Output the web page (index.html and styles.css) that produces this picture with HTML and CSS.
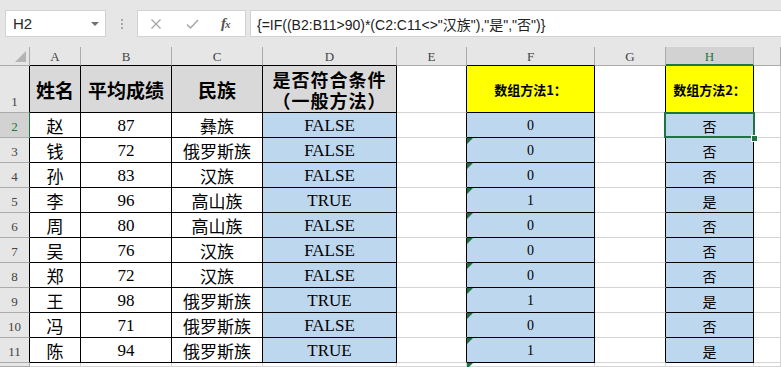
FILE: index.html
```html
<!DOCTYPE html>
<html lang="zh">
<head>
<meta charset="utf-8">
<title>Sheet</title>
<link rel="stylesheet" href="styles.css">
</head>
<body>
<div class="bar">
  <div class="namebox"><span>H2</span><span class="caret"></span></div>
  <div class="sep"><i></i><i></i><i></i></div>
  <div class="btns">
    <svg class="ic-x" width="12" height="12" viewBox="0 0 12 12"><path d="M1.5 1.5L10.5 10.5M10.5 1.5L1.5 10.5" stroke="#a6a6a6" stroke-width="1.3" fill="none"/></svg>
    <svg class="ic-ok" width="13" height="12" viewBox="0 0 13 12"><path d="M1 6.5L4.5 10L12 2" stroke="#a6a6a6" stroke-width="1.5" fill="none"/></svg>
    <span class="fx"><i>f</i><i class="sub">x</i></span>
  </div>
  <div class="formula">{=IF((B2:B11&gt;90)*(C2:C11&lt;&gt;"汉族"),"是","否")}</div>
</div>
<div class="sheet">
  <!-- header row -->
  <div class="corner"><span class="tri"></span></div>
  <div class="ch bk">A</div><div class="ch bk">B</div><div class="ch bk">C</div><div class="ch bk">D</div>
  <div class="ch">E</div><div class="ch bk">F</div><div class="ch">G</div><div class="ch on">H</div><div class="ch"></div>
  <!-- row 1 -->
  <div class="rh rk">1</div>
  <div class="c bx g hd">姓名</div><div class="c bx g hd">平均成绩</div><div class="c bx g hd">民族</div>
  <div class="c bx g hd two"><span>是否符合条件</span><span>（一般方法）</span></div>
  <div class="c rk"></div><div class="c bx y hs">数组方法1：</div><div class="c rk"></div><div class="c bx y hs">数组方法2：</div><div class="c"></div>
  <!-- row 2 -->
  <div class="rh on">2</div>
  <div class="c bx">赵</div><div class="c bx">87</div><div class="c bx">彝族</div><div class="c bx bl">FALSE</div>
  <div class="c rk"></div><div class="c bx bl sm">0</div><div class="c rk"></div><div class="c bx bl sm selc">否<span class="sel"></span><span class="handle"></span></div><div class="c"></div>
  <!-- row 3 -->
  <div class="rh rk">3</div>
  <div class="c bx">钱</div><div class="c bx">72</div><div class="c bx">俄罗斯族</div><div class="c bx bl">FALSE</div>
  <div class="c rk"></div><div class="c bx bl sm t">0</div><div class="c rk"></div><div class="c bx bl sm">否</div><div class="c"></div>
  <!-- row 4 -->
  <div class="rh rk">4</div>
  <div class="c bx">孙</div><div class="c bx">83</div><div class="c bx">汉族</div><div class="c bx bl">FALSE</div>
  <div class="c rk"></div><div class="c bx bl sm t">0</div><div class="c rk"></div><div class="c bx bl sm">否</div><div class="c"></div>
  <!-- row 5 -->
  <div class="rh rk">5</div>
  <div class="c bx">李</div><div class="c bx">96</div><div class="c bx">高山族</div><div class="c bx bl">TRUE</div>
  <div class="c rk"></div><div class="c bx bl sm t">1</div><div class="c rk"></div><div class="c bx bl sm">是</div><div class="c"></div>
  <!-- row 6 -->
  <div class="rh rk">6</div>
  <div class="c bx">周</div><div class="c bx">80</div><div class="c bx">高山族</div><div class="c bx bl">FALSE</div>
  <div class="c rk"></div><div class="c bx bl sm t">0</div><div class="c rk"></div><div class="c bx bl sm">否</div><div class="c"></div>
  <!-- row 7 -->
  <div class="rh rk">7</div>
  <div class="c bx">吴</div><div class="c bx">76</div><div class="c bx">汉族</div><div class="c bx bl">FALSE</div>
  <div class="c rk"></div><div class="c bx bl sm t">0</div><div class="c rk"></div><div class="c bx bl sm">否</div><div class="c"></div>
  <!-- row 8 -->
  <div class="rh rk">8</div>
  <div class="c bx">郑</div><div class="c bx">72</div><div class="c bx">汉族</div><div class="c bx bl">FALSE</div>
  <div class="c rk"></div><div class="c bx bl sm t">0</div><div class="c rk"></div><div class="c bx bl sm">否</div><div class="c"></div>
  <!-- row 9 -->
  <div class="rh rk">9</div>
  <div class="c bx">王</div><div class="c bx">98</div><div class="c bx">俄罗斯族</div><div class="c bx bl">TRUE</div>
  <div class="c rk"></div><div class="c bx bl sm t">1</div><div class="c rk"></div><div class="c bx bl sm">是</div><div class="c"></div>
  <!-- row 10 -->
  <div class="rh rk">10</div>
  <div class="c bx">冯</div><div class="c bx">71</div><div class="c bx">俄罗斯族</div><div class="c bx bl">FALSE</div>
  <div class="c rk"></div><div class="c bx bl sm t">0</div><div class="c rk"></div><div class="c bx bl sm">否</div><div class="c"></div>
  <!-- row 11 -->
  <div class="rh rk">11</div>
  <div class="c bx">陈</div><div class="c bx">94</div><div class="c bx">俄罗斯族</div><div class="c bx bl">TRUE</div>
  <div class="c rk"></div><div class="c bx bl sm t">1</div><div class="c rk"></div><div class="c bx bl sm">是</div><div class="c"></div>
  <!-- row 12 (partial) -->
  <div class="rh"></div>
  <div class="c"></div><div class="c"></div><div class="c"></div><div class="c"></div>
  <div class="c"></div><div class="c t"></div><div class="c"></div><div class="c"></div><div class="c"></div>
</div>
</body>
</html>
```
FILE: styles.css
```css
html, body {
  margin: 0;
  padding: 0;
}
body {
  width: 781px;
  height: 367px;
  overflow: hidden;
  background: #fff;
  font-family: "Liberation Serif", "Noto Sans CJK SC", serif;
  color: #000;
}

/* ---------- formula bar ---------- */
.bar {
  height: 47px;
  box-sizing: border-box;
  background: #e6e6e6;
  display: flex;
  align-items: flex-start;
  padding-top: 10px;
}
.namebox {
  margin-left: 5px;
  width: 101px;
  height: 27px;
  box-sizing: border-box;
  background: #fff;
  border: 1px solid #d2d2d2;
  display: flex;
  align-items: center;
  justify-content: space-between;
  padding: 0 6px 0 7px;
  font: 15px "Liberation Sans", sans-serif;
  color: #262626;
}
.caret {
  width: 0;
  height: 0;
  border-left: 4px solid transparent;
  border-right: 4px solid transparent;
  border-top: 4px solid #707070;
}
.sep {
  width: 31px;
  height: 27px;
  display: flex;
  flex-direction: column;
  align-items: center;
  justify-content: center;
  gap: 2px;
}
.sep i {
  display: block;
  width: 2px;
  height: 2px;
  background: #a8a8a8;
}
.btns {
  width: 109px;
  height: 27px;
  box-sizing: border-box;
  background: #fff;
  border: 1px solid #d2d2d2;
  display: flex;
  align-items: center;
}
.ic-x { margin-left: 12px; }
.ic-ok { margin-left: 24px; }
.fx {
  margin-left: 22px;
  font-family: "Liberation Serif", serif;
  font-size: 15px;
  font-weight: bold;
  color: #555;
  letter-spacing: -1px;
}
.fx .sub { font-size: 11px; }
.formula {
  margin-left: 4px;
  flex: 1;
  height: 27px;
  box-sizing: border-box;
  background: #fff;
  border: 1px solid #d2d2d2;
  border-right: none;
  padding-left: 6px;
  display: flex;
  align-items: center;
  font: 14px "Liberation Sans", "Noto Sans CJK SC", sans-serif;
  color: #222;
  white-space: nowrap;
}

/* ---------- sheet grid ---------- */
.sheet {
  display: grid;
  grid-template-columns: 30px 51px 91px 91px 134px 70px 128px 71px 88px 1fr;
  grid-template-rows: 19px 47px repeat(10, 25px) 1fr;
  height: 320px;
}
.sheet > div {
  box-sizing: border-box;
  border-right: 1px solid #d4d4d4;
  border-bottom: 1px solid #d4d4d4;
  display: flex;
  align-items: center;
  justify-content: center;
  white-space: nowrap;
  position: relative;
}
.corner {
  background: #e6e6e6;
  border-right-color: #ababab !important;
  border-bottom-color: #ababab !important;
}
.tri {
  position: absolute;
  right: 3px;
  bottom: 3px;
  width: 0;
  height: 0;
  border-left: 11px solid transparent;
  border-bottom: 11px solid #b4b4b4;
}
.sheet > .ch {
  background: #e6e6e6;
  border-right-color: #ababab;
  border-bottom-color: #ababab;
  font-size: 13px;
  color: #444;
  padding-top: 2px;
}
.sheet > .ch.on {
  background: #d2d2d2;
  color: #217346;
  border-bottom: 2px solid #217346;
}
.sheet > .rh {
  background: #e6e6e6;
  border-right-color: #ababab;
  border-bottom-color: #ababab;
  font-size: 13px;
  color: #444;
  align-items: flex-end;
  padding-bottom: 2px;
}
.sheet > .rh.on {
  background: #d2d2d2;
  color: #217346;
  border-right: 1px solid #217346;
}
.sheet > .bk { border-bottom-color: #000; }
.sheet > .rk { border-right-color: #000; }
.sheet > .bx {
  border-right-color: #000;
  border-bottom-color: #000;
}

.c { font-size: 17px; padding-top: 1px; }
.g { background: #d9d9d9; }
.y { background: #ffff00; }
.bl { background: #bdd7ee; }
.hd {
  font-family: "Noto Sans CJK SC", sans-serif;
  font-weight: bold;
  font-size: 19px;
}
.sheet > .two {
  flex-direction: column;
  font-size: 18px;
  letter-spacing: 1px;
}
.two span {
  display: block;
  height: 21px;
  line-height: 21px;
}
.hs {
  font-family: "Noto Sans CJK SC", sans-serif;
  font-weight: bold;
  font-size: 13px;
}
.sm {
  font-size: 14px;
  font-family: "Liberation Serif", "Noto Sans CJK SC", serif;
}
.t::before {
  content: "";
  position: absolute;
  top: 0;
  left: 0;
  width: 0;
  height: 0;
  border-top: 6px solid #1e7145;
  border-right: 6px solid transparent;
}
.sel {
  position: absolute;
  left: -2px;
  top: -1px;
  right: -2px;
  bottom: -1px;
  border: 2px solid #217346;
  z-index: 2;
}
.handle {
  position: absolute;
  right: -5px;
  bottom: -5px;
  width: 5px;
  height: 5px;
  background: #217346;
  border: 1px solid #fff;
  z-index: 3;
}
```
